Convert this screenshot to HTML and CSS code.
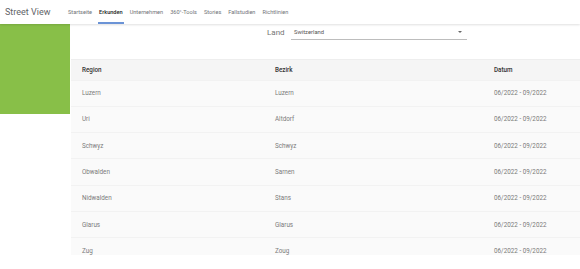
FILE: index.html
```html
<!DOCTYPE html>
<html lang="de">
<head>
    <meta charset="UTF-8">
    <title>Street View - Erkunden</title>
    <link rel="stylesheet" href="styles.css">
</head>
<body>
    <header class="topbar">
        <div class="brand">Street View</div>
        <nav class="nav">
            <a href="#">Startseite</a>
            <a href="#" class="active">Erkunden</a>
            <a href="#">Unternehmen</a>
            <a href="#">360°-Tools</a>
            <a href="#">Stories</a>
            <a href="#">Fallstudien</a>
            <a href="#">Richtlinien</a>
        </nav>
    </header>

    <div class="page">
        <aside class="side">
            <div class="side-image"></div>
        </aside>

        <main class="content">
            <div class="filter">
                <span class="filter-label">Land</span>
                <div class="select">
                    <span>Switzerland</span>
                    <span class="caret"></span>
                </div>
            </div>

            <div class="table-wrap">
                <table class="places">
                    <thead>
                        <tr>
                            <th>Region</th>
                            <th>Bezirk</th>
                            <th>Datum</th>
                        </tr>
                    </thead>
                    <tbody>
                        <tr><td>Luzern</td><td>Luzern</td><td>06/2022 - 09/2022</td></tr>
                        <tr><td>Uri</td><td>Altdorf</td><td>06/2022 - 09/2022</td></tr>
                        <tr><td>Schwyz</td><td>Schwyz</td><td>06/2022 - 09/2022</td></tr>
                        <tr><td>Obwalden</td><td>Sarnen</td><td>06/2022 - 09/2022</td></tr>
                        <tr><td>Nidwalden</td><td>Stans</td><td>06/2022 - 09/2022</td></tr>
                        <tr><td>Glarus</td><td>Glarus</td><td>06/2022 - 09/2022</td></tr>
                        <tr><td>Zug</td><td>Zoug</td><td>06/2022 - 09/2022</td></tr>
                    </tbody>
                </table>
            </div>
        </main>
    </div>
</body>
</html>
```

FILE: styles.css
```css
* {
    margin: 0;
    padding: 0;
    box-sizing: border-box;
}

body {
    font-family: Roboto, 'Liberation Sans', sans-serif;
    background: #fff;
    color: #5f6368;
    overflow: hidden;
}

.topbar {
    height: 24px;
    display: flex;
    align-items: stretch;
    padding-left: 5px;
    box-shadow: 0 1px 2px rgba(0, 0, 0, 0.12);
    position: relative;
    z-index: 1;
}

.brand {
    font-family: Roboto, 'Open Sans', sans-serif;
    font-size: 9px;
    color: #5f6368;
    display: flex;
    align-items: center;
    width: 62px;
    padding-bottom: 1px;
}

.nav {
    display: flex;
    gap: 5px;
}

.nav a {
    font-size: 5.6px;
    color: #6f7378;
    text-decoration: none;
    display: flex;
    align-items: center;
    padding: 0 1px;
    border-bottom: 2px solid transparent;
    padding-top: 2px;
}

.nav a.active {
    color: #202124;
    font-weight: 500;
    border-bottom-color: #6b93d6;
}

.page {
    display: flex;
    gap: 1px;
}

.side {
    width: 70px;
    flex-shrink: 0;
}

.side-image {
    height: 90px;
    background: #88bf48;
}

.content {
    flex: 1;
}

.filter {
    height: 35px;
    display: flex;
    align-items: flex-start;
    padding-left: 196px;
    padding-top: 2px;
}

.filter-label {
    font-size: 8px;
    color: #757575;
    width: 24px;
    line-height: 13px;
}

.select {
    width: 176px;
    height: 14px;
    display: flex;
    align-items: center;
    justify-content: space-between;
    padding: 0 5px 1px 3px;
    border-bottom: 1px solid #bdbdbd;
    font-size: 5.8px;
    color: #555;
}

.caret {
    width: 0;
    height: 0;
    border-left: 2px solid transparent;
    border-right: 2px solid transparent;
    border-top: 2px solid #666;
}

.table-wrap {
    height: 196px;
    overflow: hidden;
    border-top: 1px solid #eeeeee;
}

.places {
    width: 100%;
    border-collapse: collapse;
    font-size: 6.3px;
}

.places th {
    text-align: left;
    font-weight: 500;
    color: #333;
    background: #f5f5f5;
    height: 20px;
    padding-left: 11px;
}

.places td {
    height: 26.3px;
    padding-left: 11px;
    color: #7a7a7a;
    background: #fafafa;
    border-top: 1px solid #f2f2f2;
}

.places th:nth-child(1),
.places td:nth-child(1) {
    width: 195px;
}

.places th:nth-child(2),
.places td:nth-child(2) {
    width: 217px;
    padding-left: 9px;
}
```
